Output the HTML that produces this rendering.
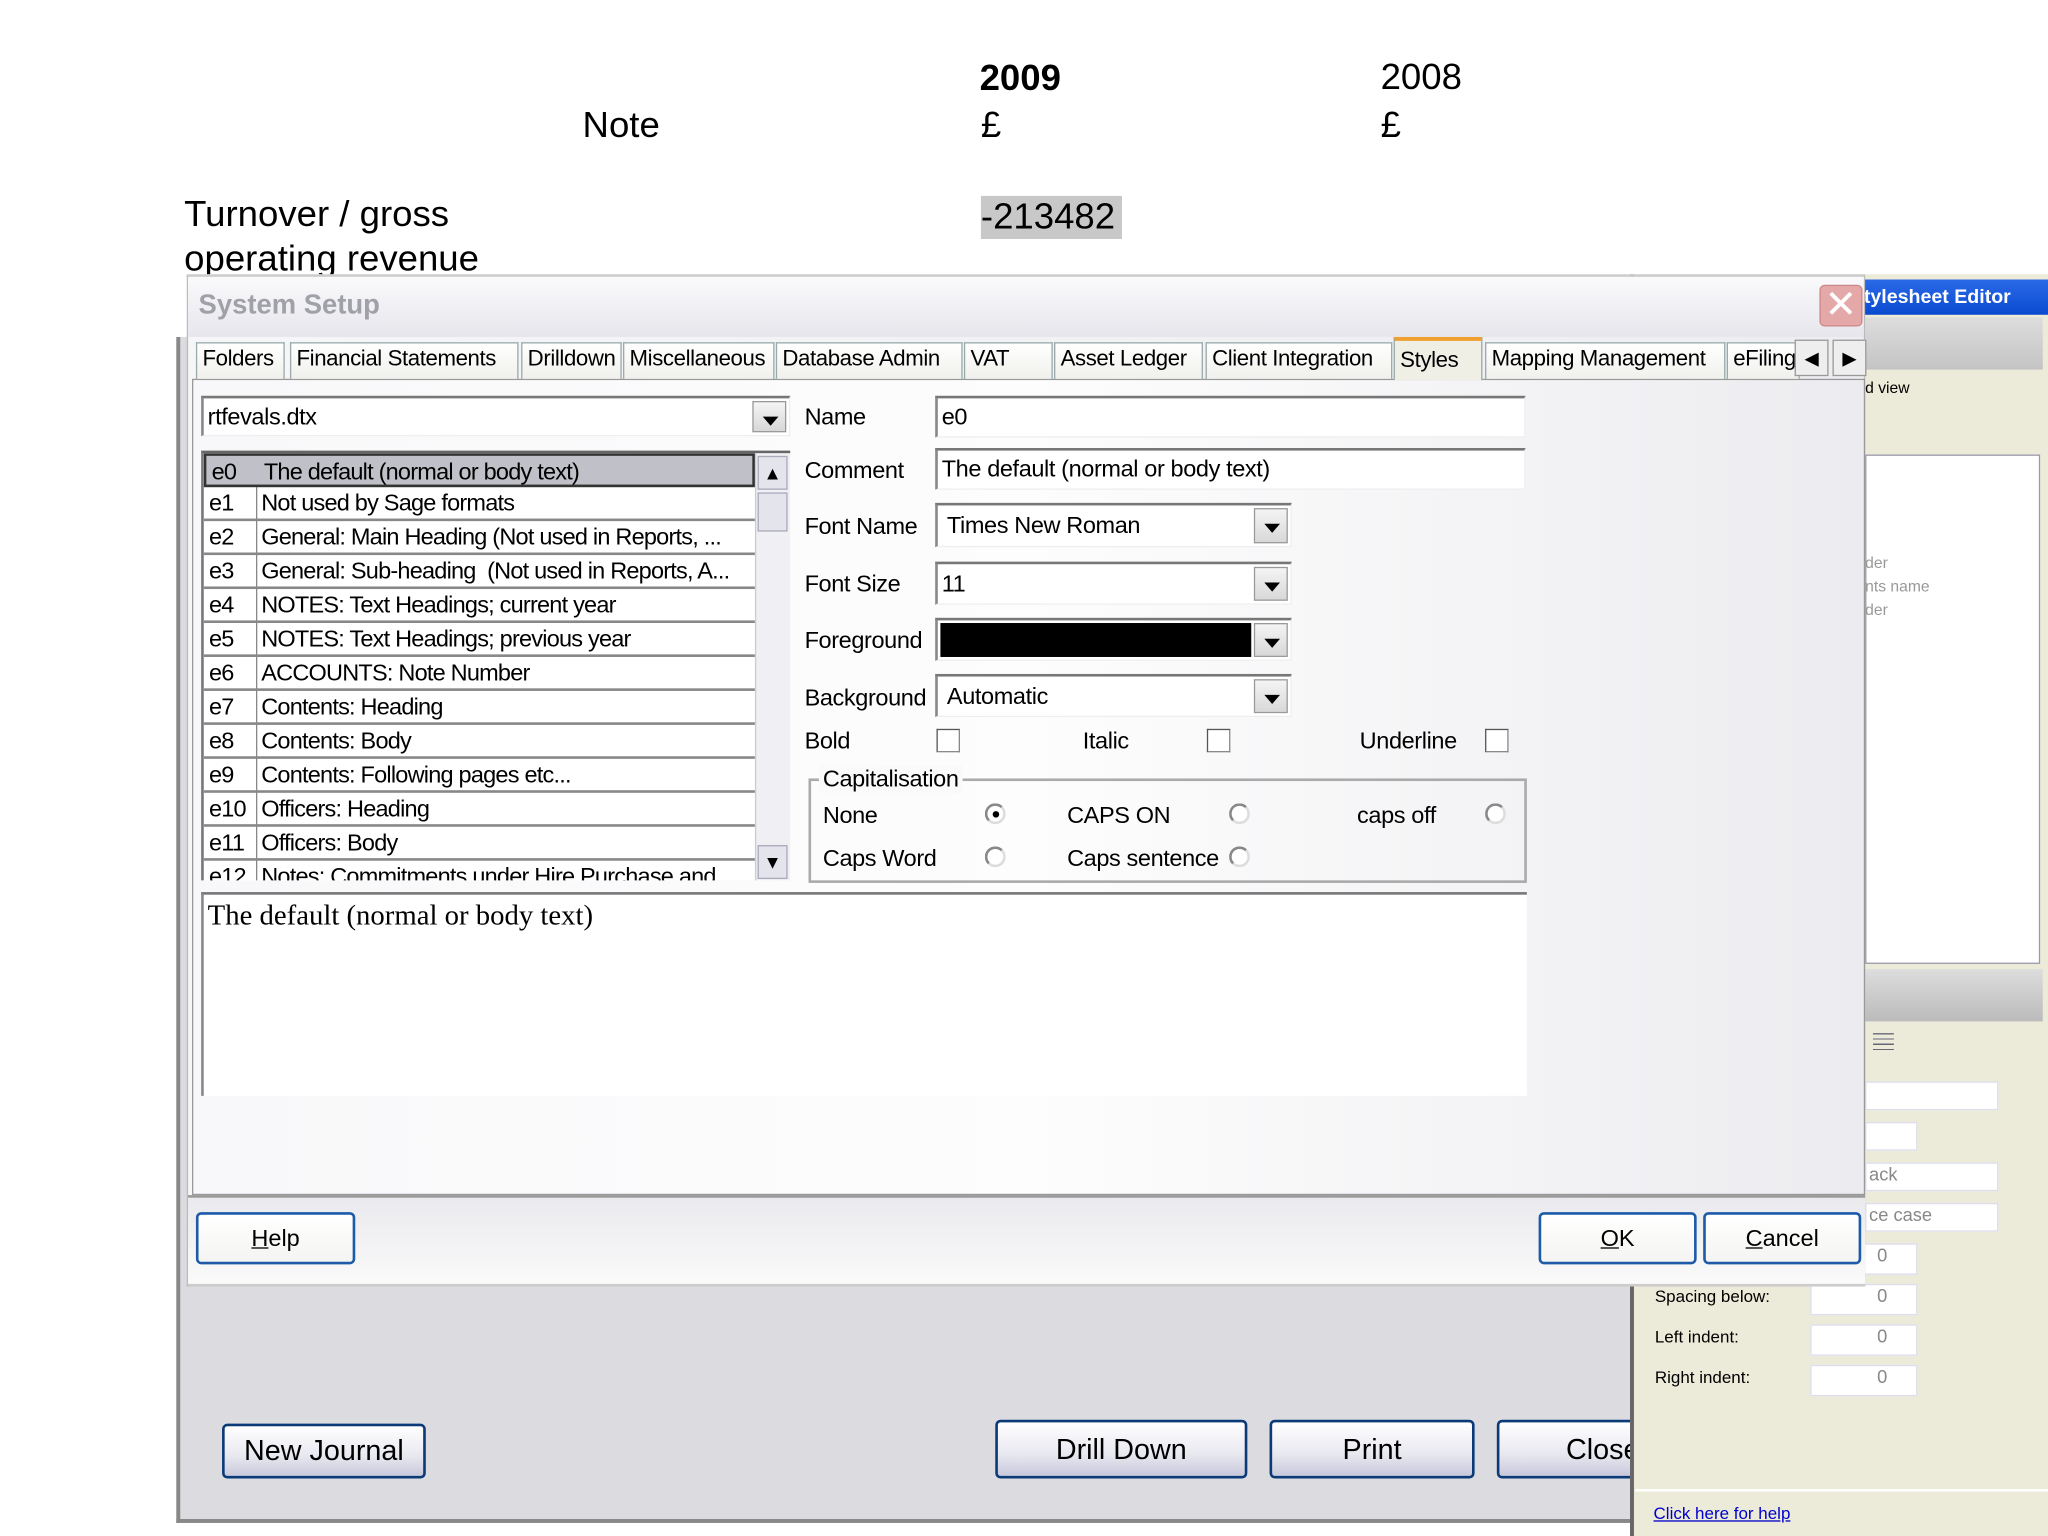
<!DOCTYPE html>
<html><head><meta charset="utf-8"><style>
*{margin:0;padding:0;box-sizing:border-box}
html,body{width:2048px;height:1536px;overflow:hidden;background:#fff}
#w{position:absolute;left:0;top:0;width:1568px;height:1176px;transform:scale(1.30612);transform-origin:0 0;font-family:"Liberation Sans",sans-serif;color:#000}
.a{position:absolute;white-space:nowrap}
.t{font-size:18px;letter-spacing:-0.3px}
.btn{position:absolute;border:2px solid #1d5aa8;border-radius:4px;background:linear-gradient(#fff,#f4f4f2);text-align:center;font-size:18px}
.bb{position:absolute;border:2px solid #0a3a78;border-radius:4px;background:linear-gradient(#fff,#e8e8f0 60%,#c8c8dc);text-align:center;font-size:22px}
.inp{position:absolute;background:#fff;border-top:2px solid #777;border-left:2px solid #888;border-right:1px solid #eee;border-bottom:1px solid #eee;font-size:18px;padding-left:3px;white-space:nowrap;letter-spacing:-0.3px}
.dd{position:absolute;right:2px;top:2px;bottom:2px;width:26px;background:linear-gradient(#f4f4f4,#d8d8d8);border:1px solid #999}
.dd:after{content:"";position:absolute;left:7px;top:11px;border-left:6px solid transparent;border-right:6px solid transparent;border-top:7px solid #000}
.cb{position:absolute;width:18px;height:18px;border:1px solid #888;border-top-color:#555;border-left-color:#555;background:#fff}
.rd{position:absolute;width:16px;height:16px;border-radius:50%;border:2px solid #888;border-right-color:#ddd;border-bottom-color:#ddd;background:#fff}
.row{position:absolute;left:0;width:422px;height:26px;border-bottom:2px solid #888;font-size:18px;line-height:24px;letter-spacing:-0.6px;white-space:nowrap}
.row span{position:absolute;left:4px}
.row b{font-weight:normal;position:absolute;left:44px}
.tab{position:absolute;top:262px;height:28px;border:1px solid #9aa;border-bottom:none;background:linear-gradient(#fff,#f0f0ec);font-size:17px;padding-left:4px;line-height:24px;white-space:nowrap;overflow:hidden;letter-spacing:-0.3px}
.sp{position:absolute;background:#fff;border:1px solid #dde;font-size:14px;color:#888;text-align:right;padding-right:22px}
</style></head><body><div id="w">
<div class="a" style="left:750px;top:44px;font-size:28px;font-weight:bold">2009</div>
<div class="a" style="left:1057px;top:43px;font-size:28px">2008</div>
<div class="a" style="left:446px;top:80px;font-size:28px">Note</div>
<div class="a" style="left:751px;top:80px;font-size:28px">£</div>
<div class="a" style="left:1057px;top:80px;font-size:28px">£</div>
<div class="a" style="left:141px;top:148px;font-size:28px">Turnover / gross</div>
<div class="a" style="left:141px;top:182px;font-size:28px;height:28px;overflow:hidden">operating revenue</div>
<div class="a" style="left:751px;top:150px;width:108px;height:33px;background:#c8c8c8;font-size:28px;line-height:32px">-213482</div>

<div class="a" style="left:135px;top:258px;width:1120px;height:908px;background:#dcdce0;border:3px solid #888;border-top:none"></div>
<div class="bb" style="left:170px;top:1090px;width:156px;height:42px;line-height:38px">New Journal</div>
<div class="bb" style="left:762px;top:1087px;width:193px;height:45px;line-height:41px">Drill Down</div>
<div class="bb" style="left:972px;top:1087px;width:157px;height:45px;line-height:41px">Print</div>
<div class="bb" style="left:1146px;top:1087px;width:120px;height:45px;line-height:41px;text-align:left;padding-left:51px">Close</div>

<div class="a" style="left:1248px;top:210px;width:320px;height:966px;background:#ecead8;border-left:3px solid #666"></div>
<div class="a" style="left:1425px;top:214px;width:143px;height:27px;background:linear-gradient(#2a6ae8,#0a4ad0);color:#fff;font-weight:bold;font-size:15px;line-height:27px;padding-left:2px">tylesheet Editor</div>
<div class="a" style="left:1428px;top:243px;width:136px;height:40px;background:linear-gradient(#ddd,#c4c4c4)"></div>
<div class="a" style="left:1428px;top:290px;font-size:12px">d view</div>
<div class="a" style="left:1428px;top:348px;width:134px;height:390px;background:#fff;border:1px solid #99a"></div>
<div class="a" style="left:1428px;top:424px;font-size:12px;color:#999">der</div>
<div class="a" style="left:1428px;top:442px;font-size:12px;color:#999">nts name</div>
<div class="a" style="left:1428px;top:460px;font-size:12px;color:#999">der</div>
<div class="a" style="left:1428px;top:742px;width:136px;height:40px;background:linear-gradient(#ddd,#bbb)"></div>
<div class="a" style="left:1434px;top:791px;width:16px;height:14px;background:repeating-linear-gradient(#667 0 1px,transparent 1px 4px)"></div>
<div class="sp" style="left:1428px;top:828px;width:102px;height:22px"></div>
<div class="sp" style="left:1428px;top:859px;width:40px;height:22px"></div>
<div class="sp" style="left:1428px;top:890px;width:102px;height:22px;text-align:left;padding-left:2px">ack</div>
<div class="sp" style="left:1428px;top:921px;width:102px;height:22px;text-align:left;padding-left:2px">ce case</div>
<div class="a" style="left:1267px;top:985px;font-size:13px">Spacing below:</div>
<div class="a" style="left:1267px;top:1016px;font-size:13px">Left indent:</div>
<div class="a" style="left:1267px;top:1047px;font-size:13px">Right indent:</div>
<div class="sp" style="left:1386px;top:952px;width:82px;height:24px">0</div>
<div class="sp" style="left:1386px;top:983px;width:82px;height:24px">0</div>
<div class="sp" style="left:1386px;top:1014px;width:82px;height:24px">0</div>
<div class="sp" style="left:1386px;top:1045px;width:82px;height:24px">0</div>
<div class="a" style="left:1252px;top:1140px;width:316px;height:2px;background:#fff"></div>
<div class="a" style="left:1266px;top:1151px;font-size:13px;color:#00c;text-decoration:underline">Click here for help</div>

<div class="a" style="left:143px;top:210px;width:1285px;height:775px;background:linear-gradient(90deg,#f6f6f8,#eeeef2);border:1px solid #bbb;border-top:2px solid #ccc"></div>
<div class="a" style="left:144px;top:212px;width:1283px;height:46px;background:linear-gradient(#fafafc,#e6e6ec)"></div>
<div class="a" style="left:152px;top:222px;font-size:21px;font-weight:bold;color:#a0a0a8">System Setup</div>
<div class="a" style="left:1393px;top:218px;width:33px;height:32px;border-radius:4px;background:#e4a8a8;border:1px solid #c88;color:#fff;font-size:30px;line-height:30px;text-align:center">✕</div>
<div class="a" style="left:147px;top:290px;width:1281px;height:625px;background:linear-gradient(90deg,#f8f8fa,#fdfdfd 50%,#ececf0);border:1px solid #999"></div>
<div class="tab" style="left:150px;width:68px">Folders</div>
<div class="tab" style="left:222px;width:175px">Financial Statements</div>
<div class="tab" style="left:399px;width:77px">Drilldown</div>
<div class="tab" style="left:477px;width:116px">Miscellaneous</div>
<div class="tab" style="left:594px;width:143px">Database Admin</div>
<div class="tab" style="left:738px;width:68px">VAT</div>
<div class="tab" style="left:807px;width:114px">Asset Ledger</div>
<div class="tab" style="left:923px;width:143px">Client Integration</div>
<div class="tab" style="left:1067px;top:258px;height:33px;width:68px;border-top:3px solid #f0a030;background:#f0efe6;line-height:30px">Styles</div>
<div class="tab" style="left:1137px;width:184px">Mapping Management</div>
<div class="tab" style="left:1322px;width:56px">eFiling</div>
<div class="a" style="left:1374px;top:260px;width:26px;height:28px;background:#eee;border:1px solid #999;font-size:14px;text-align:center;line-height:26px">◀</div>
<div class="a" style="left:1403px;top:260px;width:26px;height:28px;background:#eee;border:1px solid #999;font-size:14px;text-align:center;line-height:26px">▶</div>

<div class="inp" style="left:154px;top:303px;width:451px;height:31px;line-height:28px">rtfevals.dtx<div class="dd"></div></div>
<div class="a" style="left:154px;top:345px;width:451px;height:329px;background:#fff;border-top:2px solid #666;border-left:2px solid #777;overflow:hidden">
<div class="a" style="left:40px;top:0;width:1px;height:330px;background:#888"></div>
<div class="row" style="top:0;background:#c0c0c8;border:2px solid #333"><span>e0</span><b>The default (normal or body text)</b></div>
<div class="row" style="top:26px"><span>e1</span><b>Not used by Sage formats</b></div>
<div class="row" style="top:52px"><span>e2</span><b>General: Main Heading (Not used in Reports, ...</b></div>
<div class="row" style="top:78px"><span>e3</span><b>General: Sub-heading &nbsp;(Not used in Reports, A...</b></div>
<div class="row" style="top:104px"><span>e4</span><b>NOTES: Text Headings; current year</b></div>
<div class="row" style="top:130px"><span>e5</span><b>NOTES: Text Headings; previous year</b></div>
<div class="row" style="top:156px"><span>e6</span><b>ACCOUNTS: Note Number</b></div>
<div class="row" style="top:182px"><span>e7</span><b>Contents: Heading</b></div>
<div class="row" style="top:208px"><span>e8</span><b>Contents: Body</b></div>
<div class="row" style="top:234px"><span>e9</span><b>Contents: Following pages etc...</b></div>
<div class="row" style="top:260px"><span>e10</span><b>Officers: Heading</b></div>
<div class="row" style="top:286px"><span>e11</span><b>Officers: Body</b></div>
<div class="row" style="top:312px"><span>e12</span><b>Notes: Commitments under Hire Purchase and</b></div>
<div class="a" style="left:422px;top:0;width:27px;height:330px;background:#f0f0f4;border-left:1px solid #ccc"></div>
<div class="a" style="left:424px;top:2px;width:23px;height:26px;background:#e4e4ec;border:1px solid #aab;text-align:center;font-size:14px;line-height:24px">▲</div>
<div class="a" style="left:424px;top:30px;width:23px;height:30px;background:#e4e4ec;border:1px solid #aab"></div>
<div class="a" style="left:424px;top:300px;width:23px;height:26px;background:#e4e4ec;border:1px solid #aab;text-align:center;font-size:14px;line-height:24px">▼</div>
</div>
<div class="a t" style="left:616px;top:309px">Name</div>
<div class="a t" style="left:616px;top:350px">Comment</div>
<div class="a t" style="left:616px;top:393px">Font Name</div>
<div class="a t" style="left:616px;top:437px">Font Size</div>
<div class="a t" style="left:616px;top:480px">Foreground</div>
<div class="a t" style="left:616px;top:524px">Background</div>
<div class="a t" style="left:616px;top:557px">Bold</div>
<div class="inp" style="left:716px;top:303px;width:452px;height:32px;line-height:29px">e0</div>
<div class="inp" style="left:716px;top:343px;width:452px;height:32px;line-height:29px">The default (normal or body text)</div>
<div class="inp" style="left:716px;top:385px;width:273px;height:34px;line-height:31px;padding-left:7px">Times New Roman<div class="dd"></div></div>
<div class="inp" style="left:716px;top:430px;width:273px;height:33px;line-height:30px">11<div class="dd"></div></div>
<div class="inp" style="left:716px;top:473px;width:273px;height:33px"><div class="a" style="left:2px;top:2px;width:238px;height:26px;background:#000"></div><div class="dd"></div></div>
<div class="inp" style="left:716px;top:516px;width:273px;height:33px;line-height:30px;padding-left:7px">Automatic<div class="dd"></div></div>
<div class="cb" style="left:717px;top:558px"></div>
<div class="a t" style="left:829px;top:557px">Italic</div>
<div class="cb" style="left:924px;top:558px"></div>
<div class="a t" style="left:1041px;top:557px">Underline</div>
<div class="cb" style="left:1137px;top:558px"></div>
<div class="a" style="left:619px;top:596px;width:550px;height:80px;border:2px solid #aaa"></div>
<div class="a t" style="left:627px;top:586px;background:#fafafa;padding:0 3px">Capitalisation</div>
<div class="a t" style="left:630px;top:614px">None</div>
<div class="a t" style="left:817px;top:614px">CAPS ON</div>
<div class="a t" style="left:1039px;top:614px">caps off</div>
<div class="a t" style="left:630px;top:647px">Caps Word</div>
<div class="a t" style="left:817px;top:647px">Caps sentence</div>
<div class="rd" style="left:754px;top:615px"><div class="a" style="left:4px;top:4px;width:5px;height:5px;border-radius:50%;background:#000"></div></div>
<div class="rd" style="left:941px;top:615px"></div>
<div class="rd" style="left:1137px;top:615px"></div>
<div class="rd" style="left:754px;top:648px"></div>
<div class="rd" style="left:941px;top:648px"></div>
<div class="a" style="left:154px;top:683px;width:1015px;height:156px;background:#fff;border-top:2px solid #777;border-left:2px solid #888"></div>
<div class="a" style="left:159px;top:688px;font-family:'Liberation Serif',serif;font-size:22px">The default (normal or body text)</div>
<div class="a" style="left:144px;top:915px;width:1284px;height:70px;background:linear-gradient(#eaeaee,#fafafa);border-top:2px solid #999;border-bottom:2px solid #ccc"></div>
<div class="btn" style="left:150px;top:928px;width:122px;height:40px;line-height:36px"><u>H</u>elp</div>
<div class="btn" style="left:1178px;top:928px;width:121px;height:40px;line-height:36px"><u>O</u>K</div>
<div class="btn" style="left:1304px;top:928px;width:121px;height:40px;line-height:36px"><u>C</u>ancel</div>
</div></body></html>
